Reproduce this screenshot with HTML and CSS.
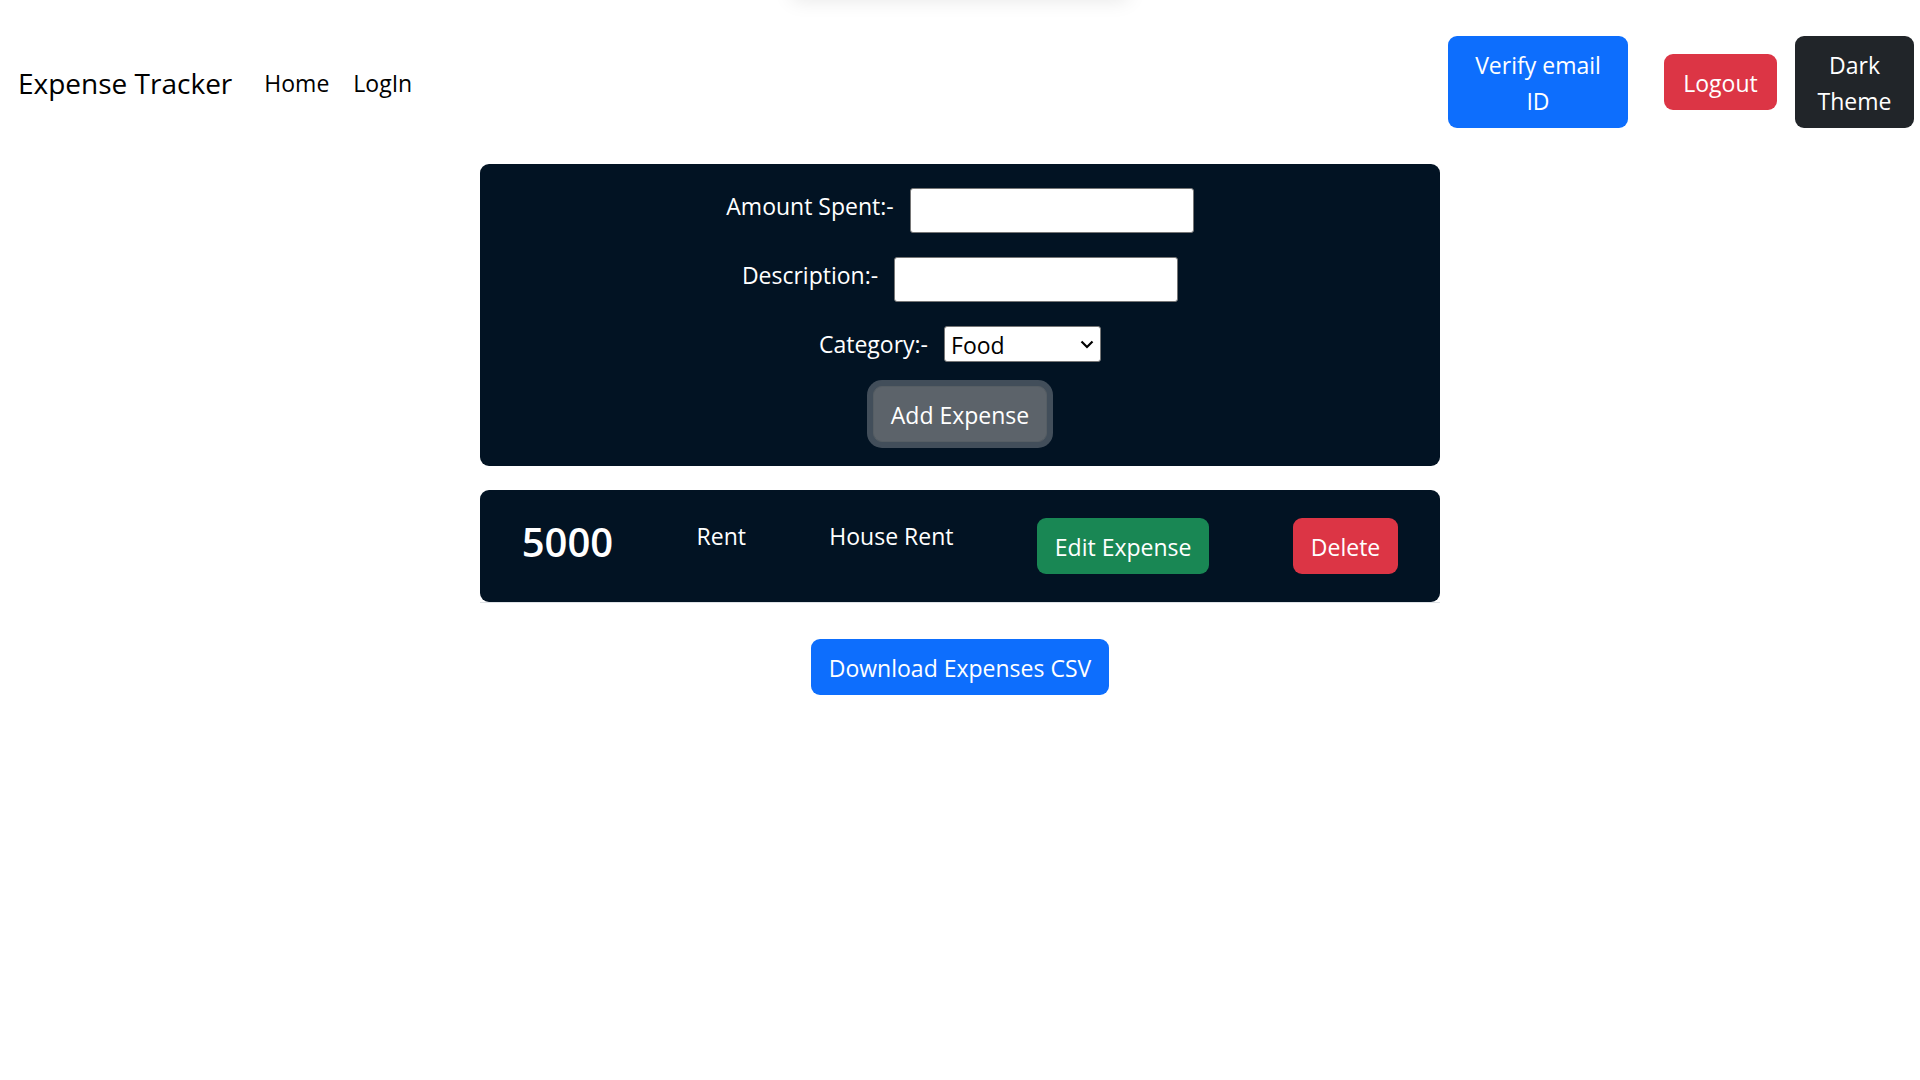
FILE: index.html
```
<!DOCTYPE html>
<html lang="en">
<head>
  <meta charset="utf-8">
  <meta name="viewport" content="width=device-width, initial-scale=1">
  <title>Expense Tracker</title>
  <link rel="stylesheet" href="styles.css">
</head>
<body>
  <div class="top-shadow"></div>
  <header class="navbar">
    <a class="brand" href="#">Expense Tracker</a>
    <nav class="nav-links">
      <a href="#">Home</a>
      <a href="#">LogIn</a>
    </nav>
    <div class="nav-actions">
      <button type="button" class="btn btn-primary btn-verify">Verify email ID</button>
      <button type="button" class="btn btn-danger btn-logout">Logout</button>
      <button type="button" class="btn btn-dark btn-theme">Dark Theme</button>
    </div>
  </header>
  <main class="content">
    <form class="card expense-form">
      <div class="field">
        <label for="amount">Amount Spent:-</label>
        <input id="amount" type="text">
      </div>
      <div class="field">
        <label for="description">Description:-</label>
        <input id="description" type="text">
      </div>
      <div class="field">
        <label for="category">Category:-</label>
        <div class="select-wrap">
          <select id="category">
            <option>Food</option>
            <option>Rent</option>
          </select>
          <svg class="chevron" width="14" height="9" viewBox="0 0 14 9" aria-hidden="true"><path d="M1.5 1.5 7 7l5.500-5.500" fill="none" stroke="#000" stroke-width="2.200"/></svg>
        </div>
      </div>
      <button type="button" class="btn btn-add">Add Expense</button>
    </form>
    <ul class="expense-list">
      <li class="card expense">
        <h2>5000</h2>
        <p>Rent</p>
        <p>House Rent</p>
        <button type="button" class="btn btn-success">Edit Expense</button>
        <button type="button" class="btn btn-danger">Delete</button>
      </li>
    </ul>
    <button type="button" class="btn btn-primary btn-download">Download Expenses CSV</button>
  </main>
</body>
</html>
```
FILE: styles.css
```
* {
  box-sizing: border-box;
}

body {
  margin: 0;
  background: #fff;
  color: #000;
  font-family: "Segoe UI", "Open Sans", "Noto Sans", sans-serif;
  font-size: 23px;
  line-height: 36px;
}

.top-shadow {
  position: absolute;
  top: -20px;
  left: 50%;
  width: 336px;
  height: 20px;
  margin-left: -168px;
  box-shadow: 0 0 20px rgba(0, 0, 0, 0.1);
}

.navbar {
  display: flex;
  align-items: center;
  padding: 36px 6px 36px 18px;
}

.navbar a {
  padding-top: 2px;
  color: inherit;
  text-decoration: none;
}

.brand {
  font-size: 28px;
}

.nav-links {
  display: flex;
  gap: 24px;
  margin-left: 32px;
}

.nav-actions {
  display: flex;
  align-items: center;
  gap: 18px;
  margin-left: auto;
}

.btn {
  padding: 10px 17px 8px;
  border: 1px solid transparent;
  border-radius: 9px;
  color: #fff;
  font: inherit;
}

.btn-primary {
  background: #0d6efd;
}

.btn-danger {
  background: #dc3545;
}

.btn-dark {
  background: #212529;
}

.btn-success {
  background: #198754;
}

.btn-verify {
  width: 180px;
  margin-right: 18px;
}

.btn-logout {
  width: 113px;
}

.btn-theme {
  width: 119px;
}

.content {
  display: flex;
  flex-direction: column;
  align-items: center;
}

.card {
  border-radius: 9px;
  background: #021323;
  color: #fff;
}

.expense-form {
  display: flex;
  flex-direction: column;
  align-items: center;
  gap: 24px;
  width: 50%;
  padding: 24px;
}

.field {
  display: flex;
  align-items: flex-start;
  gap: 16px;
}

.field input {
  width: 284px;
  height: 45px;
  padding: 2px 4px;
  border: 1px solid #767676;
  border-radius: 3px;
  background: #fff;
  font: inherit;
}

.select-wrap {
  position: relative;
  display: flex;
}

.field select {
  width: 157px;
  height: 36px;
  padding: 2px 6px 0;
  border: 1px solid #767676;
  border-radius: 3px;
  background: #fff;
  color: #000;
  font: inherit;
  line-height: 32px;
  appearance: none;
}

.chevron {
  position: absolute;
  top: 14px;
  right: 7px;
  pointer-events: none;
}

.btn-add {
  background: #5c636a;
  border-color: #565e64;
  box-shadow: 0 0 0 6px rgba(130, 138, 145, 0.5);
}

.expense-list {
  width: 50%;
  margin: 24px 0 36px;
  padding: 0;
  border-bottom: 1px solid #dee2e6;
  list-style: none;
}

.expense {
  display: flex;
  justify-content: space-around;
  align-items: flex-start;
  padding: 28px 0;
}

.expense h2 {
  margin: 0;
  font-size: 40px;
  font-weight: 600;
  line-height: 48px;
}

.expense p {
  margin: 0;
}
```
